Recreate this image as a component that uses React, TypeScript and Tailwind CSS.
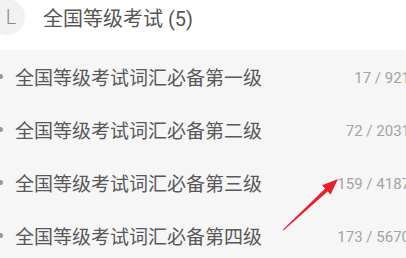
import React from "react";

const rows = [
  { name: "全国等级考试词汇必备第一级", count: "17 / 921" },
  { name: "全国等级考试词汇必备第二级", count: "72 / 2031" },
  { name: "全国等级考试词汇必备第三级", count: "159 / 4187" },
  { name: "全国等级考试词汇必备第四级", count: "173 / 5670" },
];

export default function App() {
  return (
    <div
      className="relative w-[406px] h-[258px] overflow-hidden bg-white"
      style={{ fontFamily: '"Roboto", "Noto Sans CJK SC", sans-serif' }}
    >
      <div className="flex items-center h-[50px] bg-white">
        <div className="-ml-[11px] -mt-[16px] w-[36px] h-[36px] rounded-full bg-[#f1f1f1] flex items-center justify-center shrink-0">
          <span className="text-[20px] font-light text-[#8a8a8a] leading-none pl-[8px]">L</span>
        </div>
        <div className="ml-[18px] -mt-[12px] text-[20px] text-[#555555] leading-none">
          全国等级考试 (5)
        </div>
      </div>
      <div className="bg-[#f6f6f6] h-[208px] pt-[2px] w-[410px]">
        {rows.map((r) => (
          <div key={r.name} className="flex items-center h-[53px]">
            <div className="-ml-[2px] -mt-[5px] w-[5px] h-[5px] rounded-full bg-[#9a9a9a] shrink-0" />
            <div className="ml-[12px] text-[19px] text-[#585858] leading-none whitespace-nowrap">
              {r.name}
            </div>
            <div className="ml-auto text-[15px] text-[#a3a3a3] leading-none whitespace-nowrap">
              {r.count}
            </div>
          </div>
        ))}
      </div>
      <svg
        className="absolute left-0 top-0"
        width="406"
        height="258"
        viewBox="0 0 406 258"
      >
        <polygon
          points="338,179 330.6,194.5 327.6,191.4 283.5,230.5 282.8,229.8 325.2,188.6 322,185.3"
          fill="#e8202a"
        />
      </svg>
    </div>
  );
}
